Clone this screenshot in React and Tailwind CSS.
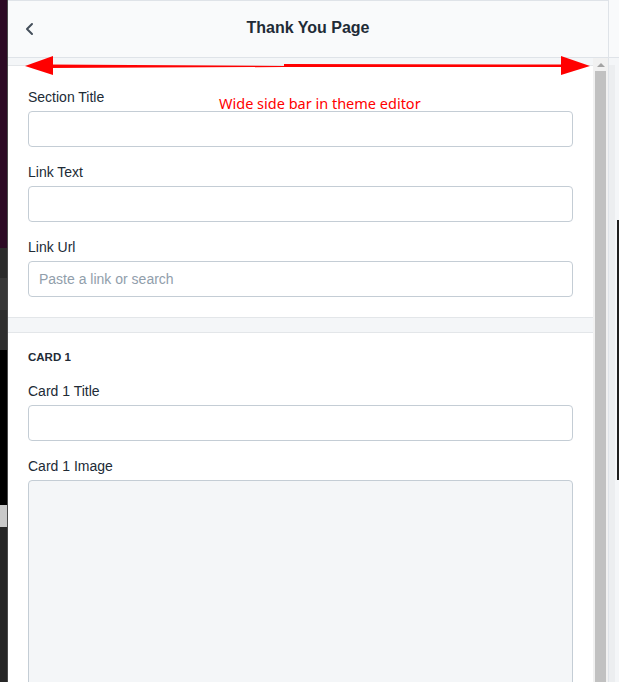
import React from "react";

const fields = [
  { label: "Section Title", placeholder: "" },
  { label: "Link Text", placeholder: "" },
  { label: "Link Url", placeholder: "Paste a link or search" },
];

function Field({ label, placeholder }) {
  return (
    <div>
      <div className="text-[14px] leading-5 text-[#212b36] mb-1">{label}</div>
      <input
        readOnly
        placeholder={placeholder}
        className="block w-full h-9 rounded-[4px] border border-[#c4cdd5] bg-white px-[10px] text-[14px] placeholder:text-[#919eab] outline-none"
      />
    </div>
  );
}

export default function App() {
  return (
    <div
      className="relative flex w-[619px] h-[682px] overflow-hidden bg-white"
      style={{ fontFamily: '"Liberation Sans", Arial, sans-serif' }}
    >
      {/* desktop behind, left edge */}
      <div className="flex flex-col w-[7px] shrink-0">
        <div className="h-[248px] bg-[#2c0a24]" />
        <div className="h-[30px] bg-[#2b2b2b]" />
        <div className="h-[32px] bg-[#383838]" />
        <div className="h-[40px] bg-[#2e2e2e]" />
        <div className="h-[155px] bg-black" />
        <div className="h-[22px] bg-[#c9c9c9]" />
        <div className="flex-1 bg-[#262626]" />
      </div>
      <div className="w-px shrink-0 bg-[#4a4a4a]" />

      {/* sidebar */}
      <div className="flex flex-col w-[601px] shrink-0 border-r border-[#dfe3e8]">
        <div className="relative flex items-center justify-center h-[58px] shrink-0 bg-[#f9fafb] border-b border-t border-[#dfe3e8]">
          <svg className="absolute left-[15px] top-[21px]" width="14" height="14" viewBox="0 0 14 14">
            <path d="M9 2 L4 7 L9 12" fill="none" stroke="#454f5b" strokeWidth="2" strokeLinecap="round" strokeLinejoin="round" />
          </svg>
          <div className="text-[16px] font-bold text-[#212b36] leading-5 -mt-[2px]">Thank You Page</div>
        </div>

        <div className="flex flex-1 min-h-0">
          <div className="flex-1 bg-[#f4f6f8] pt-[7px] overflow-hidden">
            <div className="bg-white border-t border-b border-[#e3e6e9] px-5 pt-[21px] pb-5 flex flex-col gap-[15px]">
              {fields.map((f) => (
                <Field key={f.label} {...f} />
              ))}
            </div>
            <div className="h-[14px]" />
            <div className="bg-white border-t border-[#e3e6e9] px-5 pt-[16px] pb-10 h-full">
              <div className="text-[11.5px] font-bold uppercase leading-4 text-[#212b36] mb-4">Card 1</div>
              <div className="flex flex-col gap-[15px]">
                <Field label="Card 1 Title" placeholder="" />
                <div>
                  <div className="text-[14px] leading-5 text-[#212b36] mb-1">Card 1 Image</div>
                  <div className="h-[260px] rounded-[4px] border border-[#c4cdd5] bg-[#f4f6f8]" />
                </div>
              </div>
            </div>
          </div>
          {/* scrollbar */}
          <div className="flex flex-col items-center w-[15px] shrink-0 bg-[#f1f1f1]">
            <svg className="mt-[4px]" width="8" height="6" viewBox="0 0 8 6">
              <path d="M0 5 L4 1 L8 5 Z" fill="#a3a3a3" />
            </svg>
            <div className="mt-[3px] w-[11px] flex-1 bg-[#c1c1c1]" />
          </div>
        </div>
      </div>

      {/* preview edge, right */}
      <div className="flex flex-col flex-1 bg-[#f4f6f8]">
        <div className="h-[58px] border-b border-[#dfe3e8] bg-[#f9fafb]" />
        <div className="flex flex-1 pt-[7px]">
          <div className="w-[6px] bg-[#eceef0]" />
          <div className="flex-1 flex flex-col">
            <div className="h-[155px]" />
            <div className="h-[260px] w-[2px] ml-auto bg-[#1f1f1f]" />
          </div>
        </div>
      </div>

      {/* annotation */}
      <svg className="absolute left-0 top-0 pointer-events-none" width="619" height="120" viewBox="0 0 619 120">
        <path d="M48 64.5 L284 66 L284 64 L566 64.5 L566 67 L284 67 L48 68 Z" fill="#ff0000" />
        <path d="M25 66 L53 56 L53 75 Z" fill="#ff0000" />
        <path d="M590 66 L561 56 L561 75 Z" fill="#ff0000" />
      </svg>
      <div
        className="absolute left-[219px] top-[93px] text-[14.5px] leading-5 text-[#ff0000] pointer-events-none"
        style={{ fontFamily: '"Noto Sans", sans-serif' }}
      >
        Wide side bar in theme editor
      </div>
    </div>
  );
}
